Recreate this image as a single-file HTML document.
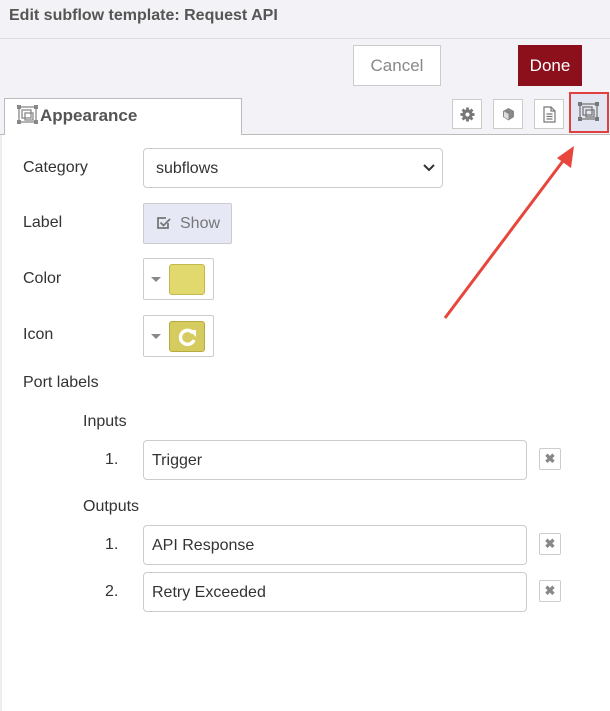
<!DOCTYPE html><html><head><style>
body{margin:0;width:610px;height:711px;background:#fff;font-family:"Liberation Sans",sans-serif;position:relative;overflow:hidden;color:#333}
.a{position:absolute}
.lbl{font-size:16px;color:#333}
.in{border:1px solid #ccc;border-radius:4px;background:#fff;box-sizing:border-box}
.x{width:22px;height:22px;border:1px solid #ccc;border-radius:2px;box-sizing:border-box;color:#888;font-size:13px;text-align:center;line-height:20px;font-weight:bold}
.tb{width:30px;height:30px;border:1px solid #ccc;box-sizing:border-box;background:#fff;top:99px}
</style></head><body>
<div class="a" style="left:0;top:0;width:610px;height:38px;background:#f3f3f7;border-bottom:1px solid #ddd"></div>
<div class="a" style="left:9px;top:7px;font-size:16px;font-weight:bold;color:#555">Edit subflow template: Request API</div>
<div class="a" style="left:0;top:39px;width:610px;height:55px;background:#f3f3f7;border-bottom:1px solid #ddd"></div>
<div class="a" style="left:353px;top:45px;width:88px;height:41px;border:1px solid #ccc;background:#fff;box-sizing:border-box;text-align:center;line-height:39px;font-size:17px;color:#888">Cancel</div>
<div class="a" style="left:518px;top:45px;width:64px;height:41px;background:#8c101c;text-align:center;line-height:41px;font-size:17px;color:#fff">Done</div>
<div class="a" style="left:0;top:94px;width:610px;height:40px;background:#f3f3f7;border-bottom:1px solid #bbb"></div>
<div class="a" style="left:4px;top:98px;width:238px;height:37px;background:#fff;border:1px solid #bbb;border-bottom:none;box-sizing:border-box"></div>
<svg class="a" style="left:17px;top:105px" width="22" height="20" viewBox="0 0 22 20" fill="none" stroke="#888" stroke-width="1.3"><rect x="2" y="2" width="17" height="15"/><rect x="5" y="5" width="9" height="8"/><rect x="8" y="8" width="8" height="7"/><g fill="#888" stroke="none"><rect x="0" y="0" width="4" height="4"/><rect x="17" y="0" width="4" height="4"/><rect x="0" y="15" width="4" height="4"/><rect x="17" y="15" width="4" height="4"/></g></svg>
<div class="a" style="left:40px;top:106px;font-size:17px;font-weight:bold;color:#555">Appearance</div>
<div class="a tb" style="left:452px"><svg class="a" style="left:7px;top:7px" width="15" height="15" viewBox="0 0 16 16"><circle cx="8" cy="8" r="5.5" fill="#777"/><g stroke="#777" stroke-width="3"><line x1="8" y1="0.5" x2="8" y2="15.5"/><line x1="0.5" y1="8" x2="15.5" y2="8"/><line x1="2.7" y1="2.7" x2="13.3" y2="13.3"/><line x1="13.3" y1="2.7" x2="2.7" y2="13.3"/></g><circle cx="8" cy="8" r="2.2" fill="#fff"/></svg></div>
<div class="a tb" style="left:493px"><svg class="a" style="left:7px;top:7px" width="15" height="15" viewBox="0 0 15 15"><path d="M7.5 1L13 4v6l-5.5 3.5L2 10V4z" fill="#888"/><path d="M3 4.5l4.5 2.5v5.5L3 10z" fill="#ddd"/></svg></div>
<div class="a tb" style="left:534px"><svg class="a" style="left:8px;top:6px" width="13" height="17" viewBox="0 0 13 17" fill="none" stroke="#777" stroke-width="1.2"><path d="M1 1h7l4 4v11H1z M8 1v4h4 M3.5 8h6 M3.5 10.5h6 M3.5 13h6"/></svg></div>
<div class="a" style="left:569px;top:92px;width:40px;height:41px;border:2px solid #e04040;box-sizing:border-box;background:#e3e6f2"></div>
<svg class="a" style="left:578px;top:102px" width="22" height="20" viewBox="0 0 22 20" fill="none" stroke="#777" stroke-width="1.3"><rect x="2" y="2" width="17" height="15"/><rect x="5" y="5" width="9" height="8"/><rect x="8" y="8" width="8" height="7"/><g fill="#777" stroke="none"><rect x="0" y="0" width="4" height="4"/><rect x="17" y="0" width="4" height="4"/><rect x="0" y="15" width="4" height="4"/><rect x="17" y="15" width="4" height="4"/></g></svg>
<div class="a" style="left:0;top:135px;width:2px;height:576px;background:#eee"></div>
<div class="a lbl" style="left:23px;top:159px">Category</div>
<div class="a in" style="left:143px;top:148px;width:300px;height:40px"><span class="a" style="left:12px;top:11px;font-size:16px">subflows</span><svg class="a" style="left:279px;top:14px" width="12" height="10" viewBox="0 0 12 10"><path d="M1 2l5 5 5-5" stroke="#333" stroke-width="2" fill="none"/></svg></div>
<div class="a lbl" style="left:23px;top:214px">Label</div>
<div class="a" style="left:143px;top:203px;width:89px;height:41px;border:1px solid #ccc;background:#e6e8f5;box-sizing:border-box;border-radius:2px"><svg class="a" style="left:13px;top:13px" width="14" height="13" viewBox="0 0 14 13" fill="none" stroke="#777" stroke-width="1.8"><path d="M11 6v5H1V1h8"/><path d="M3.5 5.5l3 3L13 2"/></svg><span class="a" style="left:36px;top:11px;font-size:16px;color:#777">Show</span></div>
<div class="a lbl" style="left:23px;top:270px">Color</div>
<div class="a" style="left:143px;top:258px;width:71px;height:42px;border:1px solid #ccc;box-sizing:border-box;border-radius:2px"><span class="a" style="left:7px;top:18px;border:5px solid transparent;border-top-color:#888;border-bottom:none"></span><span class="a" style="left:25px;top:5px;width:36px;height:31px;background:#e2d96e;border:1px solid #c2b94e;border-radius:3px;box-sizing:border-box"></span></div>
<div class="a lbl" style="left:23px;top:326px">Icon</div>
<div class="a" style="left:143px;top:315px;width:71px;height:42px;border:1px solid #ccc;box-sizing:border-box;border-radius:2px"><span class="a" style="left:7px;top:18px;border:5px solid transparent;border-top-color:#888;border-bottom:none"></span><span class="a" style="left:25px;top:5px;width:36px;height:31px;background:#d5cb5f;border:1px solid #b5ab3f;border-radius:3px;box-sizing:border-box"><svg class="a" style="left:8px;top:5px" width="20" height="20" viewBox="0 0 20 20"><path d="M15 6A7 7 0 1 0 16 13" stroke="#fff" stroke-width="3.5" fill="none"/><path d="M11 3h7v7z" fill="#fff"/></svg></span></div>
<div class="a lbl" style="left:23px;top:374px">Port labels</div>
<div class="a lbl" style="left:83px;top:413px">Inputs</div>
<div class="a lbl" style="left:105px;top:451px">1.</div>
<div class="a in" style="left:143px;top:440px;width:384px;height:40px"><span class="a" style="left:8px;top:11px;font-size:16px">Trigger</span></div>
<div class="a x" style="left:539px;top:448px">✖</div>
<div class="a lbl" style="left:83px;top:498px">Outputs</div>
<div class="a lbl" style="left:105px;top:536px">1.</div>
<div class="a in" style="left:143px;top:525px;width:384px;height:40px"><span class="a" style="left:8px;top:11px;font-size:16px">API Response</span></div>
<div class="a x" style="left:539px;top:533px">✖</div>
<div class="a lbl" style="left:105px;top:583px">2.</div>
<div class="a in" style="left:143px;top:572px;width:384px;height:40px"><span class="a" style="left:8px;top:11px;font-size:16px">Retry Exceeded</span></div>
<div class="a x" style="left:539px;top:580px">✖</div>
<svg class="a" style="left:0;top:0" width="610" height="711"><line x1="445" y1="318" x2="566" y2="157" stroke="#e8463c" stroke-width="3"/><path d="M574 146L571 168L557 158z" fill="#e8463c"/></svg>
</body></html>
